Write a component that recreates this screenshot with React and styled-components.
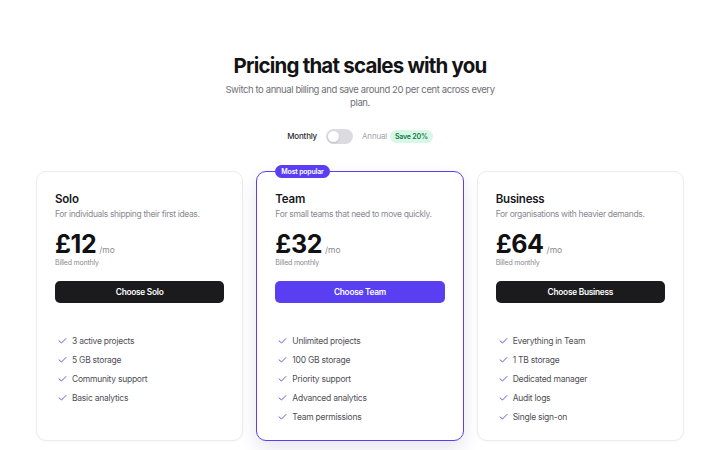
import React from "react"
import styled, { createGlobalStyle } from "styled-components"

const GlobalStyle = createGlobalStyle`
  * { box-sizing: border-box; }
  body {
    margin: 0;
    background: #ffffff;
    font-family: Inter, "Noto Sans", sans-serif;
    color: #111114;
  }
`

const PURPLE = "#5a3ef2"

const Page = styled.div`
  width: 720px;
  height: 450px;
  padding: 52px 36px 0;
  overflow: hidden;
`

const Header = styled.header`
  display: flex;
  flex-direction: column;
  align-items: center;
  text-align: center;
`

const Title = styled.h1`
  margin: 0;
  font-size: 20.5px;
  line-height: 28px;
  font-weight: 700;
  letter-spacing: -0.8px;
  color: #141416;
`

const Subtitle = styled.p`
  margin: 3px 0 0;
  max-width: 280px;
  font-size: 9.5px;
  line-height: 13px;
  letter-spacing: -0.4px;
  color: #707078;
`

const ToggleRow = styled.div`
  display: flex;
  align-items: center;
  gap: 9px;
  margin-top: 19px;
  height: 16px;
  font-size: 8px;
  letter-spacing: -0.2px;
`

const ToggleLabel = styled.span`
  color: ${p => (p.$active ? "#2a2a2e" : "#a3a3aa")};
  font-weight: ${p => (p.$active ? 500 : 400)};
`

const Switch = styled.span`
  position: relative;
  width: 27px;
  height: 15px;
  border-radius: 8px;
  background: #dcdce0;

  &::after {
    content: "";
    position: absolute;
    top: 2px;
    left: 2px;
    width: 11px;
    height: 11px;
    border-radius: 50%;
    background: #fff;
    box-shadow: 0 1px 2px rgba(0, 0, 0, 0.15);
  }
`

const SaveBadge = styled.span`
  margin-left: -6px;
  padding: 2px 5px;
  border-radius: 7px;
  background: #d8f7e6;
  color: #0f7a46;
  font-size: 7px;
  font-weight: 600;
`

const Grid = styled.div`
  display: grid;
  grid-template-columns: repeat(3, 1fr);
  gap: 13px;
  margin-top: 27px;
`

const Card = styled.div`
  position: relative;
  height: 270px;
  padding: 19px 18px 0;
  border-radius: 10px;
  background: #fff;
  border: ${p => (p.$featured ? `1.5px solid ${PURPLE}` : "1px solid #ececef")};
  box-shadow: ${p =>
    p.$featured ? "0 8px 18px rgba(60, 50, 120, 0.12)" : "0 1px 3px rgba(0, 0, 0, 0.03)"};
`

const PopularBadge = styled.span`
  position: absolute;
  top: -7px;
  left: 18px;
  padding: 0 6px;
  height: 13px;
  line-height: 13px;
  border-radius: 7px;
  background: ${PURPLE};
  color: #fff;
  font-size: 7px;
  font-weight: 600;
  letter-spacing: -0.2px;
`

const PlanName = styled.h2`
  margin: 0;
  font-size: 11.5px;
  line-height: 16px;
  font-weight: 600;
  letter-spacing: -0.2px;
  color: #18181b;
`

const PlanDesc = styled.p`
  margin: 1px 0 0;
  font-size: 8.5px;
  line-height: 13px;
  letter-spacing: -0.35px;
  color: #8a8a92;
`

const PriceRow = styled.div`
  display: flex;
  align-items: baseline;
  gap: 3px;
  margin-top: 10px;
  height: 26px;
`

const Price = styled.span`
  font-size: 25px;
  line-height: 26px;
  font-weight: 700;
  letter-spacing: -0.4px;
  color: #111114;
`

const Per = styled.span`
  font-size: 8.5px;
  color: #8a8a92;
`

const Billed = styled.div`
  margin-top: 1px;
  font-size: 7px;
  line-height: 10px;
  letter-spacing: -0.2px;
  color: #8a8a92;
`

const Button = styled.button`
  display: block;
  width: 100%;
  height: 22px;
  margin-top: 13px;
  border: none;
  border-radius: 5px;
  background: ${p => (p.$primary ? PURPLE : "#1b1b1d")};
  color: #fff;
  font-family: inherit;
  font-size: 8.3px;
  font-weight: 600;
  letter-spacing: -0.25px;
  cursor: pointer;
`

const Features = styled.ul`
  list-style: none;
  margin: 28px 0 0;
  padding: 0 0 0 3px;
`

const Feature = styled.li`
  display: flex;
  align-items: center;
  gap: 5px;
  height: 19px;
  font-size: 8.5px;
  letter-spacing: -0.25px;
  color: #4f4f57;
`

const Check = () => (
  <svg width="9" height="9" viewBox="0 0 10 10" fill="none">
    <path d="M1.2 5.4 L3.9 7.8 L8.8 2.8" stroke="#6a56d8" strokeWidth="1.1" strokeLinecap="round" strokeLinejoin="round" />
  </svg>
)

const plans = [
  {
    name: "Solo",
    desc: "For individuals shipping their first ideas.",
    price: "£12",
    cta: "Choose Solo",
    features: ["3 active projects", "5 GB storage", "Community support", "Basic analytics"],
  },
  {
    name: "Team",
    desc: "For small teams that need to move quickly.",
    price: "£32",
    cta: "Choose Team",
    featured: true,
    features: ["Unlimited projects", "100 GB storage", "Priority support", "Advanced analytics", "Team permissions"],
  },
  {
    name: "Business",
    desc: "For organisations with heavier demands.",
    price: "£64",
    cta: "Choose Business",
    features: ["Everything in Team", "1 TB storage", "Dedicated manager", "Audit logs", "Single sign-on"],
  },
]

export default function App() {
  return (
    <Page>
      <GlobalStyle />
      <Header>
        <Title>Pricing that scales with you</Title>
        <Subtitle>Switch to annual billing and save around 20 per cent across every plan.</Subtitle>
        <ToggleRow>
          <ToggleLabel $active>Monthly</ToggleLabel>
          <Switch />
          <ToggleLabel>Annual</ToggleLabel>
          <SaveBadge>Save 20%</SaveBadge>
        </ToggleRow>
      </Header>
      <Grid>
        {plans.map(plan => (
          <Card key={plan.name} $featured={plan.featured}>
            {plan.featured && <PopularBadge>Most popular</PopularBadge>}
            <PlanName>{plan.name}</PlanName>
            <PlanDesc>{plan.desc}</PlanDesc>
            <PriceRow>
              <Price>{plan.price}</Price>
              <Per>/mo</Per>
            </PriceRow>
            <Billed>Billed monthly</Billed>
            <Button $primary={plan.featured}>{plan.cta}</Button>
            <Features>
              {plan.features.map(f => (
                <Feature key={f}>
                  <Check />
                  {f}
                </Feature>
              ))}
            </Features>
          </Card>
        ))}
      </Grid>
    </Page>
  )
}
